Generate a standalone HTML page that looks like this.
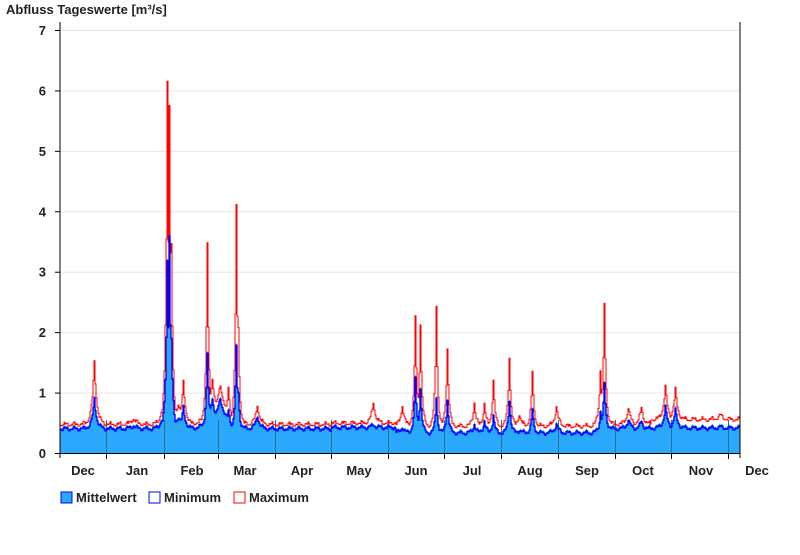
<!DOCTYPE html>
<html><head><meta charset="utf-8"><style>
body{margin:0;background:#fff;width:800px;height:550px;overflow:hidden;font-family:"Liberation Sans",Arial,sans-serif}
svg text{font-family:"Liberation Sans",Arial,sans-serif;font-weight:bold;font-size:13px;fill:#222}
</style></head><body>
<svg id="s" width="800" height="550" xmlns="http://www.w3.org/2000/svg">
<text x="6" y="14">Abfluss Tageswerte [m³/s]</text>
<g id="grid"></g>
<path id="fill" fill="#29a8fc" stroke="none"/>
<g id="mon"></g>
<polyline id="mx" fill="none" stroke="#ff0000" stroke-width="1"/>
<polyline id="mn" fill="none" stroke="#0000ff" stroke-width="1.3"/>
<line x1="60" y1="22" x2="60" y2="458" stroke="#000"/>
<line x1="740" y1="22" x2="740" y2="458" stroke="#000"/>
<line x1="56" y1="453.5" x2="740" y2="453.5" stroke="#000"/>
<g id="lab"></g>
<rect x="61" y="492" width="11" height="11" fill="#29a8fc" stroke="#0000ff"/>
<text x="76" y="502">Mittelwert</text>
<rect x="149" y="492" width="11" height="11" fill="#fff" stroke="#0000ff"/>
<text x="164" y="502">Minimum</text>
<rect x="234" y="492" width="11" height="11" fill="#fff" stroke="#ff0000"/>
<text x="249" y="502">Maximum</text>
</svg>
<script>
var NS="http://www.w3.org/2000/svg";
function el(p,t,a,txt){var e=document.createElementNS(NS,t);for(var k in a)e.setAttribute(k,a[k]);if(txt!=null)e.textContent=txt;document.getElementById(p).appendChild(e);}
function Y(v){return 453-v*60.43;}
for(var i=0;i<=7;i++){var y=Y(i);if(i>0)el("grid","line",{x1:60,x2:740,y1:y+.5,y2:y+.5,stroke:"#e6e6e6"});el("grid","line",{x1:55,x2:60,y1:y+.5,y2:y+.5,stroke:"#000"});el("grid","text",{x:46,y:y+5,"text-anchor":"end"},String(i));}
var b=[106,164,218,275,331,388,444,501,558,615,671,728];
b.forEach(function(x){el("lab","line",{x1:x+.5,x2:x+.5,y1:453,y2:459,stroke:"#000"});});
var m=[["Dec",83],["Jan",137],["Feb",192],["Mar",245],["Apr",302],["May",359],["Jun",416],["Jul",472],["Aug",530],["Sep",587],["Oct",643],["Nov",701],["Dec",757]];
m.forEach(function(a){el("lab","text",{x:a[1],y:475,"text-anchor":"middle"},a[0]);});
var P=[[94,0.5,1.05,1.5],[167,2.8,5.7,1.0],[169,3.2,5.3,1.0],[171,1.5,3.0,1.0],[183,0.35,0.7,1.5],[178,0.2,0.35,3],[207,1.25,3.0,1.0],[212,0.5,0.75,3],[220,0.5,0.65,4],[228,0.3,0.6,1.5],[236,1.35,3.6,0.9],[238,0.6,1.6,0.9],[257,0.22,0.33,1.5],[133,0.05,0.1,2],[161,0.15,0.22,1.5],
[415,0.9,1.8,1.0],[420,0.75,1.7,1.0],[436,0.6,2.0,0.9],[447,0.55,1.3,1.0],[402,0.1,0.35,1.5],[373,0.05,0.35,1.5],[474,0.15,0.4,1.2],[484,0.2,0.38,1.2],[493,0.3,0.78,1.0],[509,0.55,1.15,1.0],[532,0.38,0.9,1.0],[556,0.15,0.33,1.5],[519,0.05,0.2,1.5],
[604,0.75,2.0,1.0],[600,0.3,0.9,1.2],[628,0.15,0.28,1.5],[641,0.12,0.28,1.5],[665,0.35,0.55,1.5],[675,0.3,0.5,1.5],[720,0.02,0.08,2]];
function base(x){var v=0.43;if(x>395&&x<600)v=0.36;if(x>330&&x<395)v=0.45;if(x>650)v=0.44;return v+0.025*Math.sin(x*0.7)+0.015*Math.sin(x*1.9);}
function bmax(x){var v=0.03;if(x>395&&x<600)v=0.07;if(x>650)v=0.1;return v+0.02*Math.abs(Math.sin(x*1.3));}
var fp="M60,453",mnp="",mxp="";
for(var x=60;x<740;x+=1){var pm=0,px=0;
P.forEach(function(p){var d=Math.abs(x-p[0]);var f=Math.exp(-d/(p[3]*1.6));pm=Math.max(pm,p[1]*f);px=Math.max(px,p[2]*f);});
var me=base(x)+pm,mx=base(x)+bmax(x)+px,mn=me-0.03;
var x2=x+1;
var y1=Y(me).toFixed(1),y2=Y(mx).toFixed(1),y3=Y(mn).toFixed(1);
fp+=" L"+x+","+y1+" L"+x2+","+y1;
mnp+=x+","+y3+" "+x2+","+y3+" ";
mxp+=x+","+y2+" "+x2+","+y2+" ";}
fp+=" L740,453 Z";
document.getElementById("fill").setAttribute("d",fp);
document.getElementById("mn").setAttribute("points",mnp);
document.getElementById("mx").setAttribute("points",mxp);
b.forEach(function(x){el("mon","line",{x1:x+.5,x2:x+.5,y1:420,y2:453,stroke:"#2a6f8f","stroke-width":1});});
</script>
</body></html>
